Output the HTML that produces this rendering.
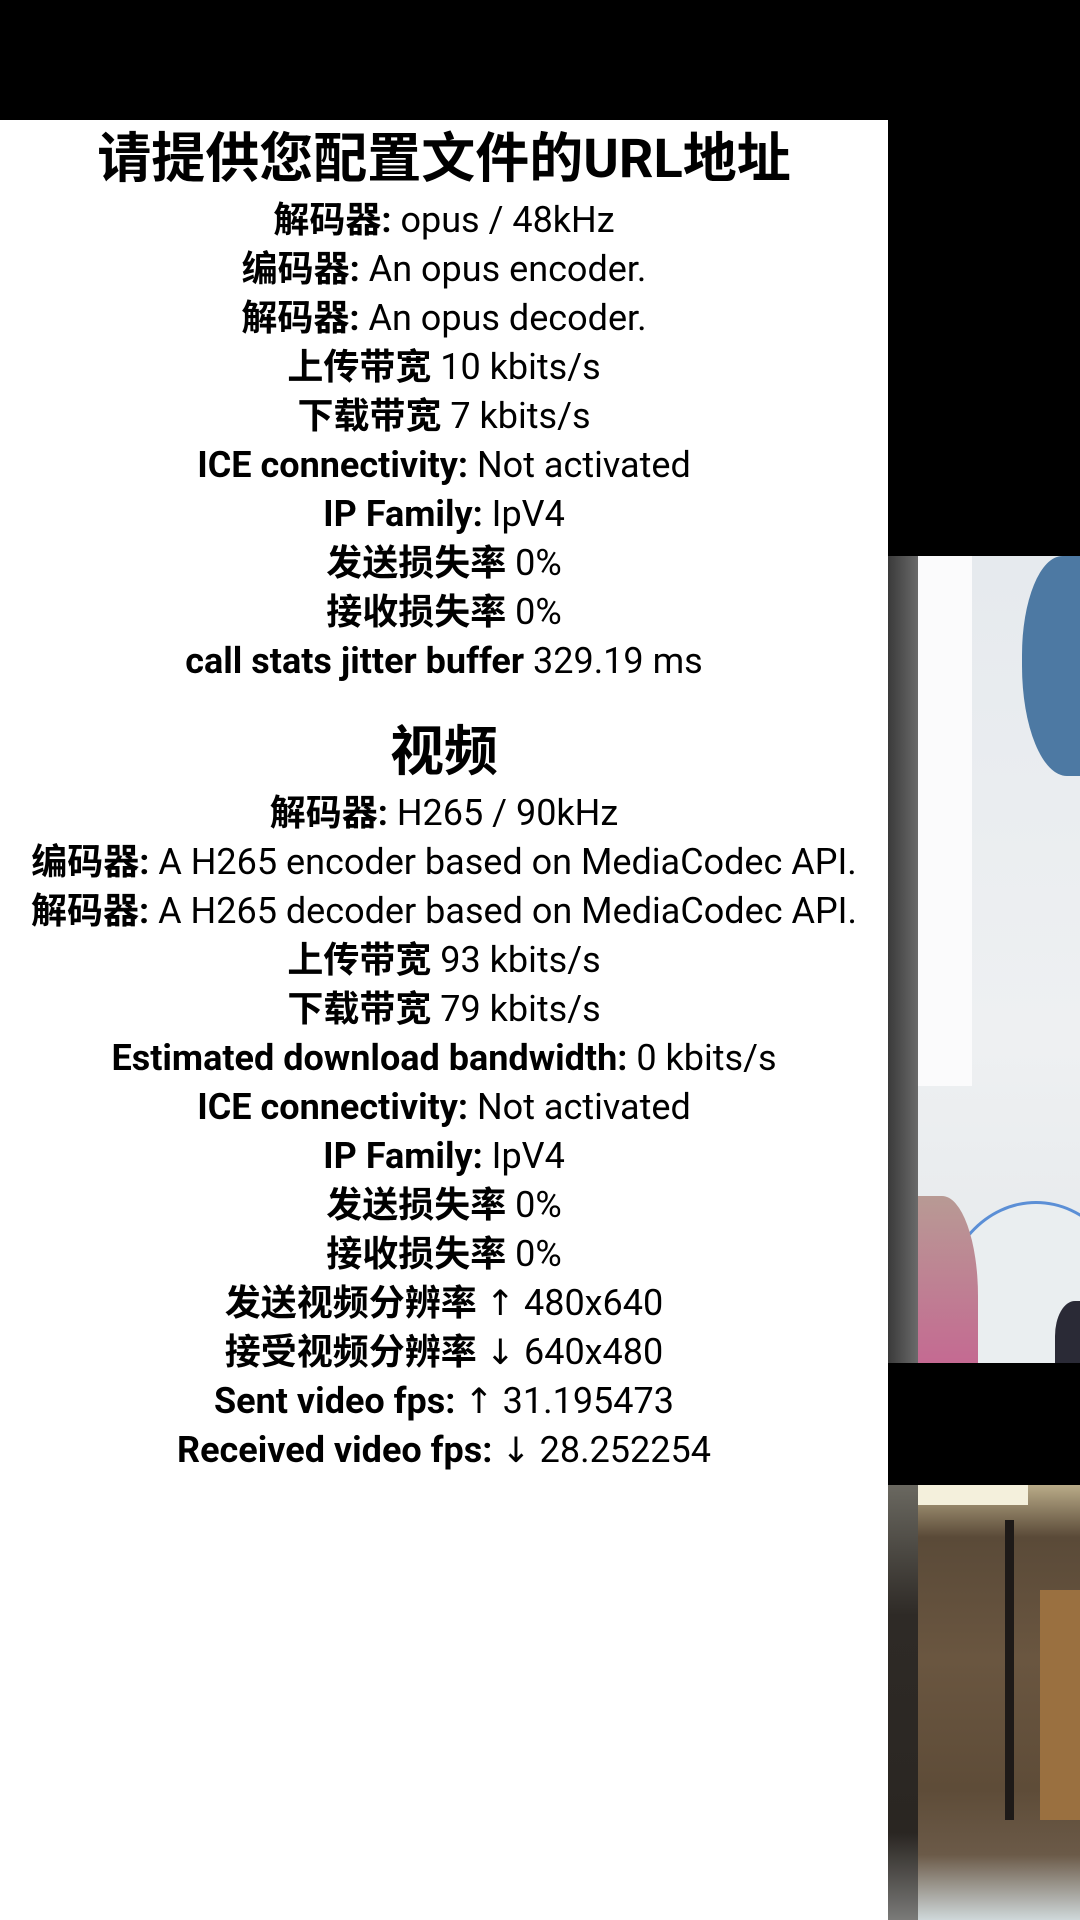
<!DOCTYPE html>
<html><head><meta charset="utf-8"><style>
html,body{margin:0;padding:0}
body{width:1080px;height:1920px;position:relative;overflow:hidden;background:#000;font-family:"Roboto","Liberation Sans","Noto Sans CJK SC",sans-serif;color:#000}
#panel{position:absolute;left:0;top:120px;width:888px;height:1800px;background:#fff}
.l{position:absolute;left:0;width:888px;text-align:center;font-size:36px;line-height:49px;white-space:nowrap}
.l b{font-weight:bold}
.ar{font-family:"DejaVu Sans",sans-serif;font-size:35px}
.t{position:absolute;left:0;width:888px;text-align:center;font-size:54px;font-weight:bold;line-height:60px;white-space:nowrap}
.a{position:absolute}
#v1,#v2{position:absolute;left:888px;width:192px;overflow:hidden}
</style></head><body>
<div id="panel"></div>
<div class="t" style="top:130px">请提供您配置文件的URL地址</div>
<div class="l" style="top:196px"><b>解码器:</b> opus / 48kHz</div>
<div class="l" style="top:245px"><b>编码器:</b> An opus encoder.</div>
<div class="l" style="top:294px"><b>解码器:</b> An opus decoder.</div>
<div class="l" style="top:343px"><b>上传带宽</b> 10 kbits/s</div>
<div class="l" style="top:392px"><b>下载带宽</b> 7 kbits/s</div>
<div class="l" style="top:441px"><b>ICE connectivity:</b> Not activated</div>
<div class="l" style="top:490px"><b>IP Family:</b> IpV4</div>
<div class="l" style="top:539px"><b>发送损失率</b> 0%</div>
<div class="l" style="top:588px"><b>接收损失率</b> 0%</div>
<div class="l" style="top:637px"><b>call stats jitter buffer</b> 329.19 ms</div>
<div class="t" style="top:723px">视频</div>
<div class="l" style="top:789px"><b>解码器:</b> H265 / 90kHz</div>
<div class="l" style="top:838px"><b>编码器:</b> A H265 encoder based on MediaCodec API.</div>
<div class="l" style="top:887px"><b>解码器:</b> A H265 decoder based on MediaCodec API.</div>
<div class="l" style="top:936px"><b>上传带宽</b> 93 kbits/s</div>
<div class="l" style="top:985px"><b>下载带宽</b> 79 kbits/s</div>
<div class="l" style="top:1034px"><b>Estimated download bandwidth:</b> 0 kbits/s</div>
<div class="l" style="top:1083px"><b>ICE connectivity:</b> Not activated</div>
<div class="l" style="top:1132px"><b>IP Family:</b> IpV4</div>
<div class="l" style="top:1181px"><b>发送损失率</b> 0%</div>
<div class="l" style="top:1230px"><b>接收损失率</b> 0%</div>
<div class="l" style="top:1279px"><b>发送视频分辨率</b> <span class="ar">↑</span> 480x640</div>
<div class="l" style="top:1328px"><b>接受视频分辨率</b> <span class="ar">↓</span> 640x480</div>
<div class="l" style="top:1377px"><b>Sent video fps:</b> <span class="ar">↑</span> 31.195473</div>
<div class="l" style="top:1426px"><b>Received video fps:</b> <span class="ar">↓</span> 28.252254</div>

<div id="v1" style="top:556px;height:807px;background:linear-gradient(180deg,#e6eaee 0%,#eef0f2 60%,#e4e8ea 100%)">
<div class="a" style="left:30px;top:0;width:54px;height:530px;background:#fbfbfc"></div>
<div class="a" style="left:134px;top:0;width:90px;height:220px;background:#4d79a3;border-radius:45% 0 0 50%"></div>
<div class="a" style="left:55px;top:645px;width:180px;height:200px;border:3px solid #5b8fd6;border-radius:50% 50% 0 0;background:#eaeef0"></div>
<div class="a" style="left:0;top:0;width:30px;height:807px;background:linear-gradient(90deg,#3a3a3a,#6a6a6a)"></div>
<div class="a" style="left:30px;top:640px;width:60px;height:167px;background:linear-gradient(180deg,#b89a94,#c46a92);border-radius:0 60% 0 0"></div>
<div class="a" style="left:167px;top:745px;width:40px;height:70px;background:#2a2a36;border-radius:50% 0 0 0"></div>
</div>
<div id="v2" style="top:1485px;height:435px;background:linear-gradient(180deg,#b9ab88 0%,#5a4a38 12%,#6a5640 40%,#5e4c38 70%,#6b5a48 85%,#cfd8da 100%)">
<div class="a" style="left:30px;top:0;width:110px;height:20px;background:#f4f0dc"></div>
<div class="a" style="left:152px;top:105px;width:40px;height:230px;background:#9a7040"></div>
<div class="a" style="left:17px;top:35px;width:8px;height:300px;background:#1e1a18"></div>
<div class="a" style="left:117px;top:35px;width:9px;height:300px;background:#1e1a18"></div>
<div class="a" style="left:0;top:0;width:30px;height:435px;background:linear-gradient(180deg,#6a6860,#2e2a26 30%,#2a2622 80%,#7a7a78)"></div>
</div>
</body></html>
